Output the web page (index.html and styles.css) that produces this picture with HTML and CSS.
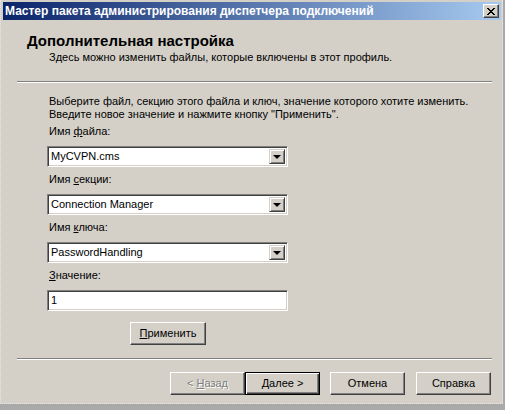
FILE: index.html
```html
<!DOCTYPE html>
<html lang="ru">
<head>
<meta charset="utf-8">
<title>Мастер пакета администрирования диспетчера подключений</title>
<link rel="stylesheet" href="styles.css">
</head>
<body>
<div class="desk">
  <div class="window">
    <div class="titlebar">
      <span class="title">Мастер пакета администрирования диспетчера подключений</span>
      <span class="close"><svg width="8" height="7" viewBox="0 0 8 7"><path d="M0 0h2v1h1v1h2V1h1V0h2v1H7v1H6v1H5v1h1v1h1v1h1v1H6V6H5V5H3v1H2v1H0V6h1V5h1V4h1V3H2V2H1V1H0z" fill="#000"/></svg></span>
    </div>
    <div class="header">
      <div class="h-title">Дополнительная настройка</div>
      <div class="h-sub">Здесь можно изменить файлы, которые включены в этот профиль.</div>
    </div>
    <div class="sep"></div>
    <div class="content">
      <p class="intro">Выберите файл, секцию этого файла и ключ, значение которого хотите изменить.<br>Введите новое значение и нажмите кнопку "Применить".</p>
      <div class="field">
        <div class="label">Имя <u>ф</u>айла:</div>
        <div class="combo"><span class="val">MyCVPN.cms</span><span class="drop"><i class="tri"></i></span></div>
      </div>
      <div class="field">
        <div class="label">Имя <u>с</u>екции:</div>
        <div class="combo"><span class="val">Connection Manager</span><span class="drop"><i class="tri"></i></span></div>
      </div>
      <div class="field">
        <div class="label">Имя <u>к</u>люча:</div>
        <div class="combo"><span class="val">PasswordHandling</span><span class="drop"><i class="tri"></i></span></div>
      </div>
      <div class="field">
        <div class="label"><u>З</u>начение:</div>
        <div class="edit"><span class="val">1</span></div>
      </div>
      <div class="apply-row"><span class="btn apply"><u>П</u>рименить</span></div>
    </div>
    <div class="sep sep-bottom"></div>
    <div class="footer">
      <span class="btn disabled">&lt;&nbsp;<u>Н</u>азад</span>
      <span class="btn default"><u>Д</u>алее &gt;</span>
      <span class="btn gap">Отмена</span>
      <span class="btn gap">Справка</span>
    </div>
  </div>
</div>
</body>
</html>
```
FILE: styles.css
```css
html, body {
  margin: 0;
  padding: 0;
}
body {
  width: 505px;
  height: 410px;
  background: #a9a9a9;
  font-family: "Liberation Sans", Arial, sans-serif;
  font-size: 11px;
  color: #000;
  overflow: hidden;
}
.desk {
  width: 503px;
  height: 404px;
  box-sizing: border-box;
  border-left: 1px dotted #e6e6e6;
  border-right: 1px dotted #e6e6e6;
  border-bottom: 1px dotted #e6e6e6;
  background: #d4d0c8;
}
.window {
  display: flex;
  flex-direction: column;
  padding: 2px 1px 0 2px;
}
.titlebar {
  height: 18px;
  display: flex;
  align-items: center;
  justify-content: space-between;
  background: linear-gradient(to right, #0a246a, #a6caf0);
  padding: 0 2px 0 2px;
}
.title {
  color: #fff;
  font-weight: bold;
  font-size: 12px;
  white-space: nowrap;
}
.close {
  width: 16px;
  height: 14px;
  box-sizing: border-box;
  background: #d4d0c8;
  border-top: 1px solid #fff;
  border-left: 1px solid #fff;
  border-right: 1px solid #404040;
  border-bottom: 1px solid #404040;
  box-shadow: inset -1px -1px 0 #808080;
  display: flex;
  align-items: center;
  justify-content: center;
  padding-right: 1px;
}
.close svg { display: block; }
.header {
  padding: 13px 0 0 24px;
  height: 48px;
}
.h-title {
  font-weight: bold;
  font-size: 15px;
  line-height: 16px;
}
.h-sub {
  padding-left: 22px;
  margin-top: 2px;
  line-height: 13px;
}
.sep {
  margin: 0 9px 0 14px;
  border-top: 1px solid #808080;
  border-bottom: 1px solid #fff;
  height: 0;
}
.content {
  padding: 12px 0 0 44px;
  height: 275px;
  box-sizing: border-box;
}
.intro {
  margin: 0 0 4px 2px;
  line-height: 13px;
}
.field {
  margin-bottom: 6px;
}
.label {
  line-height: 13px;
  margin: 0 0 8px 2px;
}
.combo, .edit {
  width: 241px;
  height: 21px;
  box-sizing: border-box;
  background: #fff;
  border-top: 1px solid #808080;
  border-left: 1px solid #808080;
  border-right: 1px solid #fff;
  border-bottom: 1px solid #fff;
  box-shadow: inset 1px 1px 0 #404040, inset -1px -1px 0 #d4d0c8;
  display: flex;
  align-items: stretch;
  padding: 2px;
}
.val {
  flex: 1;
  line-height: 15px;
  padding-left: 1px;
}
.drop {
  width: 16px;
  box-sizing: border-box;
  background: #d4d0c8;
  border-top: 1px solid #d4d0c8;
  border-left: 1px solid #d4d0c8;
  border-right: 1px solid #404040;
  border-bottom: 1px solid #404040;
  box-shadow: inset 1px 1px 0 #fff, inset -1px -1px 0 #808080;
  display: flex;
  align-items: center;
  justify-content: center;
}
.tri {
  display: block;
  width: 0;
  height: 0;
  border-left: 4px solid transparent;
  border-right: 4px solid transparent;
  border-top: 4px solid #000;
}
.apply-row {
  display: flex;
  padding-left: 83px;
  padding-top: 5px;
}
.btn {
  width: 75px;
  height: 23px;
  box-sizing: border-box;
  background: #d4d0c8;
  border-top: 1px solid #fff;
  border-left: 1px solid #fff;
  border-right: 1px solid #404040;
  border-bottom: 1px solid #404040;
  box-shadow: inset -1px -1px 0 #808080;
  display: flex;
  align-items: center;
  justify-content: center;
  line-height: 13px;
}
.apply { width: 76px; }
.footer {
  display: flex;
  justify-content: flex-end;
  padding: 12px 10px 0 0;
}
.btn.gap { margin-left: 10px; }
.btn.gap:last-child { margin-left: 11px; }
.btn.disabled {
  color: #808080;
  text-shadow: 1px 1px 0 #fff;
}
.btn.default {
  border: 1px solid #000;
  box-shadow: inset 1px 1px 0 #fff, inset -1px -1px 0 #404040, inset -2px -2px 0 #808080;
}
u { text-decoration: underline; text-underline-offset: 1px; }
```
